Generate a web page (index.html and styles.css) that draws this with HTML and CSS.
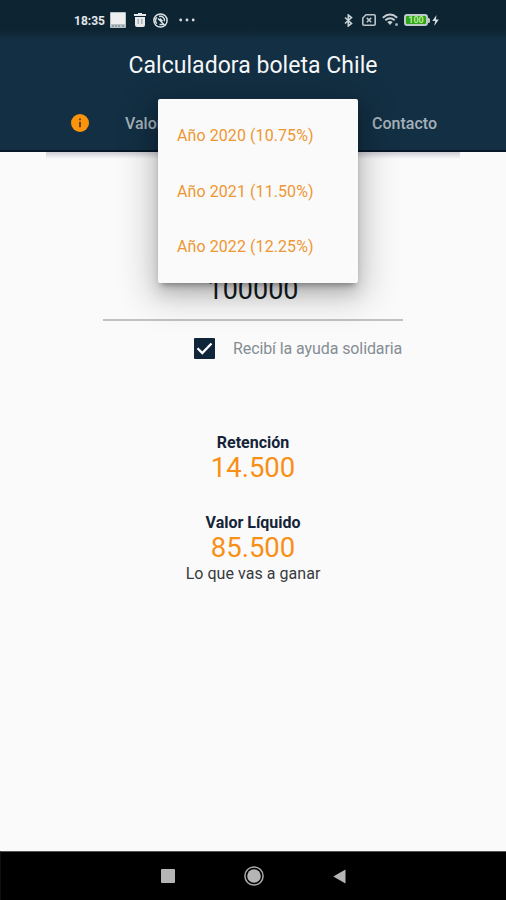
FILE: index.html
```html
<!DOCTYPE html>
<html lang="es">
<head>
<meta charset="utf-8">
<title>Calculadora boleta Chile</title>
<link rel="stylesheet" href="styles.css">
</head>
<body>
<div class="phone">
  <header class="header">
    <div class="status">
      <div class="status-left">
        <span class="clock">18:35</span>
        <svg class="i-picture" width="16" height="16" viewBox="0 0 16 16"><rect width="16" height="16" rx="1" fill="#b9c4c8"/><path d="M1 1h14v11H1z" fill="#edf0ee"/><path d="M2 14h8M12 14h2" stroke="#68777e" stroke-dasharray="2 1"/></svg>
        <svg class="i-trash" width="12" height="14" viewBox="0 0 12 14"><path d="M0 1h4V0h4v1h4v2H0zM1 4h10v8q0 2-2 2H3q-2 0-2-2z" fill="#e6eaeb"/><path d="M4.2 6v5M7.8 6v5" stroke="#8b989e"/></svg>
        <svg class="i-sync" width="15" height="15" viewBox="0 0 15 15" fill="none" stroke="#dce2e4"><circle cx="7.5" cy="7.5" r="6.6" stroke-width="1.5"/><path d="M4 10.5a4 4 0 0 1 0-6.2M6 3.5a4 4 0 0 1 5.3 4.8M5 5.5l6 6H6.5M7 5.5l2.5 2.8" stroke-width="1.4"/></svg>
        <svg class="i-more" width="16" height="4" viewBox="0 0 16 4" fill="#d5dce0"><circle cx="1.7" cy="2" r="1.4"/><circle cx="8" cy="2" r="1.4"/><circle cx="14.2" cy="2" r="1.4"/></svg>
      </div>
      <div class="status-right">
        <svg width="9" height="13" viewBox="0 0 9 13" fill="none" stroke="#c8d1d6" stroke-width="1.6"><path d="M1 3.500l6.500 6L4.300 12V1l3.200 2.500-6.500 6"/></svg>
        <svg class="i-sim" width="14" height="12" viewBox="0 0 14 12" fill="none" stroke="#b9c3c8" stroke-width="1.6"><path d="M4 .8h8q1.200 0 1.200 1.200v8q0 1.200-1.200 1.200H2Q.8 11.200.8 10V4z"/><path d="M4.800 3.900l4.400 4.400M9.200 3.900L4.800 8.300"/></svg>
        <svg class="i-wifi" width="18" height="14" viewBox="0 0 18 14" fill="none" stroke="#c5ced3"><path d="M.8 4.700q7.200-6.400 14.400 0M3.300 7.300q4.700-4 9.400 0" stroke-width="1.900"/><path d="M5.300 8.900q2.700-2 5.400 0L8 12z" fill="#c5ced3" stroke="none"/><circle cx="14.500" cy="11.500" r="1.500" fill="#9eacb3" stroke="none"/></svg>
        <div class="battery"><span>100</span></div>
        <svg class="battery-tip" width="2" height="5" viewBox="0 0 2 5"><path d="M0 0h1l1 1v3L1 5H0z" fill="#bdcbc8"/></svg>
        <svg class="i-bolt" width="7" height="11" viewBox="0 0 7 11"><path d="M4.500 0L.3 6h2.900l-1 5L6.800 4.500H3.900z" fill="#d7dfe2"/></svg>
      </div>
    </div>
    <h1 class="title">Calculadora boleta Chile</h1>
    <nav class="tabs">
      <svg class="info" width="18" height="18" viewBox="0 0 18 18"><circle cx="9" cy="9" r="9" fill="#fb930b"/><path d="M8.100 4.500h1.800v1.800H8.100zM8.100 7.800h1.800v5.500H8.100z" fill="#543d20"/></svg>
      <span class="tab tab-value">Valor</span>
      <span class="tab tab-contact">Contacto</span>
    </nav>
  </header>
  <main class="content">
    <div class="header-shadow"></div>
    <div class="amount">100000</div>
    <div class="option">
      <svg class="checkbox" width="21" height="21" viewBox="0 0 21 21"><rect width="21" height="21" rx="1" fill="#0f263a"/><path d="M3.500 10.200l4.800 4.900L17.500 5.500" fill="none" stroke="#fff" stroke-width="2.300"/></svg>
      <span class="option-label">Recibí la ayuda solidaria</span>
    </div>
    <section class="result retention"><h2>Retención</h2><strong>14.500</strong></section>
    <section class="result net"><h2>Valor Líquido</h2><strong>85.500</strong><p>Lo que vas a ganar</p></section>
  </main>
  <footer class="navigation">
    <svg width="14" height="14" viewBox="0 0 14 14"><rect width="14" height="14" rx=".8" fill="#b5b5b5"/></svg>
    <svg width="20" height="20" viewBox="0 0 20 20"><circle cx="10" cy="10" r="9.100" fill="none" stroke="#aaa" stroke-width="1.500"/><circle cx="10" cy="10" r="6.800" fill="#b5b5b5"/></svg>
    <svg width="13" height="15" viewBox="0 0 13 15"><path d="M12.500.5v14L.3 7.500z" fill="#b5b5b5"/></svg>
  </footer>
  <div class="menu">
    <div class="menu-item">Año 2020 (10.75%)</div>
    <div class="menu-item">Año 2021 (11.50%)</div>
    <div class="menu-item">Año 2022 (12.25%)</div>
  </div>
</div>
</body>
</html>
```

FILE: styles.css
```css
* { box-sizing: border-box; }
body { margin: 0; font-family: Roboto, "Liberation Sans", sans-serif; background: #fafafa; }
svg { display: block; flex: none; }
h1, h2, p { margin: 0; }
.phone { position: relative; width: 506px; height: 900px; display: flex; flex-direction: column; overflow: hidden; }
.header { height: 152px; flex: none; background: #132f43; border-bottom: 2px solid #071727; }
.status { height: 40px; display: flex; justify-content: space-between; padding: 0 67px 0 74px; background: linear-gradient(#0d2433 75%, #132f43); }
.status-left, .status-right { display: flex; align-items: center; height: 40px; }
.clock { width: 31px; color: #e3e8ea; font-size: 12px; font-weight: 700; line-height: 14px; padding-top: 1px; margin-right: 5px; }
.i-trash { margin-left: 8px; }
.i-sync { margin-left: 7px; }
.i-more { margin-left: 11px; }
.i-sim { margin-left: 9px; }
.i-wifi { margin-left: 6px; }
.battery { width: 24px; height: 12px; margin-left: 4px; border: 2px solid #bdcbc8; border-radius: 3px; background: #30a51b; display: flex; align-items: center; justify-content: center; color: #b4ed91; font-size: 9px; line-height: 8px; font-weight: 700; }
.i-bolt { margin-left: 2px; }
.title { height: 50px; line-height: 52px; text-align: center; color: #f5f7f8; font-size: 23px; font-weight: 400; letter-spacing: .04px; }
.tabs { height: 60px; display: flex; align-items: center; padding: 6px 0 0 71px; }
.tab { font-size: 16px; font-weight: 500; color: #a5b1ba; line-height: 20px; padding-top: 1px; }
.tab-value { width: 247px; margin-left: 36px; }
.content { flex: 1; display: flex; flex-direction: column; align-items: center; }
.header-shadow { width: 414px; height: 7px; background: linear-gradient(#cecdd5, #fafafa); }
.amount { width: 300px; height: 162px; padding-top: 111px; border-bottom: 2px solid #c1c2c3; text-align: center; color: #141c22; font-size: 27px; font-weight: 400; line-height: 41px; }
.option { width: 300px; height: 54px; display: flex; align-items: center; padding-left: 91px; }
.option-label { margin-left: 18px; padding-top: 1px; color: #858d94; font-size: 16px; line-height: 20px; letter-spacing: -.1px; white-space: nowrap; }
.result { text-align: center; }
.retention { height: 80px; margin-top: 57px; }
.result h2 { height: 20px; color: #152338; font-size: 16px; font-weight: 700; line-height: 22px; letter-spacing: -.02px; }
.result strong { display: block; height: 30px; color: #f88f16; font-size: 27.500px; line-height: 32px; font-weight: 400; }
.result p { color: #383b3e; font-size: 16px; line-height: 24px; letter-spacing: .04px; }
.navigation { height: 49px; flex: none; display: flex; align-items: center; padding-left: 160px; gap: 69px; background: #000; border-top: 1px solid #555; border-left: 1px solid #101010; }
.menu { position: absolute; left: 158px; top: 99px; width: 200px; height: 184px; padding: 9px 0 9px 19px; border-radius: 2px; background: #fafafa; box-shadow: 0 5px 6px -3px #0005, 0 8px 35px 8px #0003, 0 10px 16px #0002; }
.menu-item { height: 55.500px; line-height: 55.500px; color: #ee9632; font-size: 16px; letter-spacing: .08px; white-space: nowrap; }
```
